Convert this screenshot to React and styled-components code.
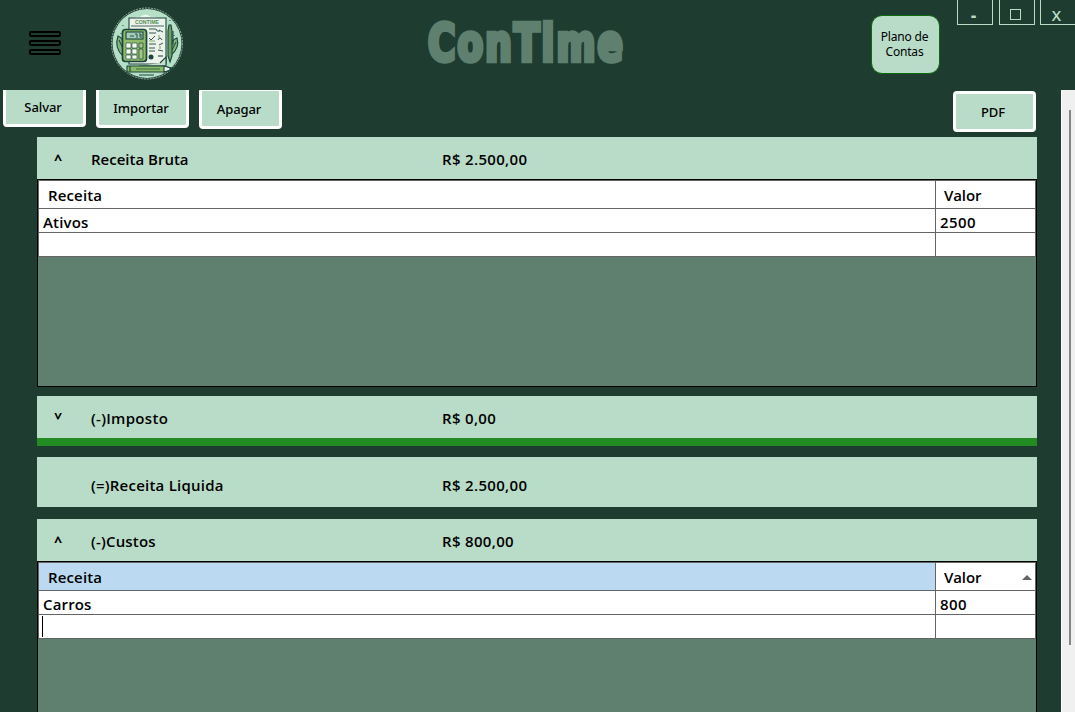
import React from "react";
import styled, { createGlobalStyle } from "styled-components";

const c = {
  dark: "#1e3c30",
  mint: "#b9dcc8",
  sage: "#5f806f",
  line: "#646464",
  green: "#228b22",
};

const GlobalStyle = createGlobalStyle`
  * { box-sizing: border-box; }
  body { margin: 0; background: ${c.dark}; overflow: hidden; }
  button { appearance: none; margin: 0; padding: 0; color: #000; }
`;

const Window = styled.div`
  display: flex;
  flex-direction: column;
  width: 1075px;
  height: 712px;
  overflow: hidden;
  background: ${c.dark};
  color: #000;
  font-family: "Open Sans", "Noto Sans", sans-serif;
`;

const TopBar = styled.header`
  display: flex;
  align-items: flex-start;
  flex: none;
  height: 90px;
  padding-left: 29px;
`;

const MenuButton = styled.button`
  display: flex;
  flex: none;
  flex-direction: column;
  gap: 3px;
  width: 32px;
  margin-top: 31px;
  border: 0;
  background: none;
`;

const MenuBar = styled.span`
  height: 6px;
  border: 2px solid #000;
  border-radius: 2px;
`;

const Logo = styled.svg`
  flex: none;
  width: 74px;
  height: 74px;
  margin: 6px 0 0 49px;
`;

const Title = styled.svg`
  flex: none;
  width: 204px;
  height: 60px;
  margin: 12px 0 0 240px;
  overflow: visible;
  text {
    font-family: "DejaVu Sans Condensed", "DejaVu Sans", sans-serif;
    font-stretch: condensed;
    font-weight: 700;
    font-size: 51px;
    letter-spacing: 2.6px;
    fill: ${c.sage};
    stroke: ${c.sage};
    stroke-width: 4.6px;
  }
`;

const PlanButton = styled.button`
  flex: none;
  width: 69px;
  height: 59px;
  margin: 15px 0 0 243px;
  border: 1px solid #0b6a0b;
  border-radius: 11px;
  background: ${c.mint};
  font: 400 12px/15px "Noto Sans", sans-serif;
  letter-spacing: -0.2px;
  padding: 0 2px 1px 0;
`;

const WindowButtons = styled.div`
  display: flex;
  flex: none;
  gap: 6px;
  margin-left: 17px;
`;

const WindowButton = styled.button`
  flex: none;
  width: 36px;
  height: 25px;
  border: 1px solid ${c.mint};
  border-top: 0;
  background: none;
  color: ${c.mint};
  font: 800 16px/18px "Open Sans", sans-serif;
  padding: 5px 3px 0 0;
  &:last-child { margin-left: -1px; font-weight: 600; font-size: 15px; }
`;

const MaximizeGlyph = styled.span`
  display: block;
  width: 11px;
  height: 11px;
  margin: 0 auto;
  border: 1px solid ${c.mint};
`;

const Viewport = styled.div`
  display: flex;
  flex: 1;
  min-height: 0;
  overflow: hidden;
`;

const Page = styled.main`
  flex: 1;
  min-width: 0;
`;

const Toolbar = styled.div`
  display: flex;
  gap: 10px;
  height: 47px;
  padding-left: 3px;
`;

const ToolButton = styled.button`
  width: ${(p) => p.$width || 83}px;
  height: 41px;
  margin-top: ${(p) => p.$top}px;
  margin-left: ${(p) => (p.$end ? "661px" : 0)};
  padding: 2px 3px 0 0;
  border: 3px solid #fff;
  border-radius: 4px;
  background: ${c.mint};
  font: 500 13px/17px "Noto Sans", sans-serif;
  letter-spacing: -0.1px;
`;

const Statement = styled.div`
  display: flex;
  flex-direction: column;
  width: 1000px;
  margin-left: 37px;
`;

const Section = styled.section`
  margin-bottom: ${(p) => p.$gap}px;
`;

const SectionHeader = styled.div`
  display: grid;
  grid-template-columns: 54px 351px 1fr;
  align-items: center;
  height: ${(p) => p.$height || 42}px;
  padding-top: ${(p) => p.$drop || 1}px;
  background: ${c.mint};
  font-size: 15px;
  font-weight: 600;
  line-height: 20px;
`;

const Label = styled.span`
  letter-spacing: ${(p) => p.$spacing || 0}px;
`;

const Amount = styled.span`
  letter-spacing: 0.33px;
`;

const Toggle = styled.span`
  width: 42px;
  text-align: center;
  font-family: "Noto Sans", sans-serif;
  font-weight: 800;
  font-size: 14px;
  transform: ${(p) => (p.$closed ? "translateY(-4px) scaleY(-1)" : "translateY(1px)")};
`;

const Accent = styled.div`
  height: 8px;
  background: ${c.green};
`;

const Grid = styled.div`
  height: 208px;
  border: 1px solid #000;
  background: ${c.sage};
`;

const Table = styled.div`
  border: 1px solid ${c.line};
  border-bottom: 0;
  font-size: 15px;
  font-weight: 600;
`;

const Row = styled.div`
  display: grid;
  grid-template-columns: 897px 1fr;
  height: ${(p) => (p.$head ? 28 : 24)}px;
`;

const Cell = styled.div`
  display: flex;
  align-items: center;
  padding: ${(p) => (p.$head ? "1px 3px 0 9px" : "3px 4px 0 4px")};
  border-bottom: 1px solid ${c.line};
  background: ${(p) => (p.$active ? "#bbdaf2" : "#fff")};
  line-height: 20px;
  letter-spacing: ${(p) => (p.$head ? 0.15 : 0.15)}px;
  &:first-child { border-right: 1px solid ${c.line}; }
  &:last-child {
    padding-left: ${(p) => (p.$head ? 8 : 4)}px;
    letter-spacing: ${(p) => (p.$head ? -0.1 : 0.4)}px;
  }
`;

const SortArrow = styled.svg`
  width: 10px;
  height: 5px;
  margin: 1px 0 0 auto;
`;

const Caret = styled.span`
  width: 1px;
  height: 21px;
  margin: -3px 0 0 -1px;
  background: #000;
`;

const Scrollbar = styled.div`
  flex: none;
  width: 14px;
  padding: 20px 0 0 8px;
  border-left: 1px solid #fff;
  background: #f0f0f0;
`;

const Thumb = styled.div`
  width: 2px;
  height: 535px;
  margin-left: -1px;
  background: #858585;
`;

function ContimeLogo() {
  return (
    <Logo viewBox="0 0 74 74" stroke="#1b453c" strokeWidth="1.1">
      <circle cx="37" cy="37.5" r="34.5" fill="#b6dfc8" stroke="none" />
      <circle cx="37" cy="37.5" r="35.5" fill="none" stroke="#b8c9bf" strokeWidth=".8" strokeDasharray="2 1" />
      <path d="M22 14q3-4 8-3q5-5 11 0q5-1 8 3z" fill="#edf7ee" stroke="none" />
      <path d="M13 50Q4 42 8 30q6 3 7 9zM61 49q9-7 6-17q-6 2-7 9z" fill="#82b47a" />
      <path d="M9 34l5 11M66 36l-5 10" fill="none" strokeWidth="1" />
      <path d="M19 12h37v46H19z" fill="#edf3eb" />
      <path d="M50 57l6-6v9H29" fill="#c9dfcc" />
      <path d="M21 20h33" strokeWidth=".8" />
      <text x="25" y="18" textLength="24" lengthAdjust="spacingAndGlyphs" fill="#518b56" stroke="none" fontFamily="Liberation Sans, sans-serif" fontWeight="700" fontSize="5.2">CONTIME</text>
      <path d="M39 23h6q2 0 2 2h3M39 27h7M39 32l2 2 4-4M48 34q2-4 4 0M39 38h7M39 42h6M39 45h6M49 24l4 2M49 39l4-2M48 44l5 1" fill="none" strokeWidth=".9" />
      <path d="M39 35h6M49 29v3M50 40v3" stroke="#78ae64" />
      <circle cx="41" cy="51" r="2.5" fill="#1b453c" stroke="none" />
      <path d="M48 50h5" />
      <rect x="12.5" y="23.5" width="24" height="32" rx="3" fill="#8fbb6a" strokeWidth="1.7" />
      <rect x="16" y="26" width="17" height="7" fill="#a5ccb7" />
      <path d="M20 30h4M25 28h2v4M29 28h2v4M29 30h2" fill="none" strokeWidth=".9" />
      <g fill="#f4f8f1" strokeWidth=".6">
        <path d="M16 37h5v5h-5zM22 37h5v5h-5zM16 43h5v5h-5zM22 43h5v5h-5zM16 49h5v4h-5zM22 49h5v4h-5z" />
      </g>
      <path d="M29 37h4v5h-4zM29 43h4v10h-4z" fill="#a5c685" strokeWidth=".7" />
      <path d="M58 25l1-6h2l1 6v25l-2 6-2-6z" fill="#739f69" />
      <path d="M63 25v14" />
      <path d="M17 60h37l10 3-10 3H17z" fill="#8aba68" />
      <path d="M54 60l10 3-10 3zM20 60v6" fill="#edf2e9" />
      <path d="M26 63h24" strokeWidth=".7" />
      <path d="M60 62l4 1-4 1z" fill="#1b453c" />
      <path d="M29 69h15M13 19v1M60 14v1M64 29v1M11 27v1" strokeWidth="1" />
    </Logo>
  );
}

function DataGrid({ name, value, active }) {
  return (
    <Grid>
      <Table>
        <Row $head>
          <Cell $head $active={active}>Receita</Cell>
          <Cell $head>
            Valor
            {active && (
              <SortArrow viewBox="0 0 10 5"><path d="M0 5L5 0L10 5z" fill="#646464" /></SortArrow>
            )}
          </Cell>
        </Row>
        <Row><Cell>{name}</Cell><Cell>{value}</Cell></Row>
        <Row><Cell>{active && <Caret />}</Cell><Cell /></Row>
      </Table>
    </Grid>
  );
}

export default function App() {
  return (
    <>
      <GlobalStyle />
      <Window>
        <TopBar>
          <MenuButton aria-label="Menu"><MenuBar /><MenuBar /><MenuBar /></MenuButton>
          <ContimeLogo />
          <Title viewBox="0 0 204 60">
            <text x="4" y="49" textLength="197" lengthAdjust="spacingAndGlyphs">ConTime</text>
          </Title>
          <PlanButton>Plano de<br />Contas</PlanButton>
          <WindowButtons>
            <WindowButton>-</WindowButton>
            <WindowButton aria-label="Maximizar"><MaximizeGlyph /></WindowButton>
            <WindowButton>X</WindowButton>
          </WindowButtons>
        </TopBar>
        <Viewport>
          <Page>
            <Toolbar>
              <ToolButton $top={-4}>Salvar</ToolButton>
              <ToolButton $top={-3} $width={93}>Importar</ToolButton>
              <ToolButton $top={-2}>Apagar</ToolButton>
              <ToolButton $top={1} $end>PDF</ToolButton>
            </Toolbar>
            <Statement>
              <Section $gap={9}>
                <SectionHeader><Toggle>^</Toggle><Label>Receita Bruta</Label><Amount>R$ 2.500,00</Amount></SectionHeader>
                <DataGrid name="Ativos" value="2500" />
              </Section>
              <Section $gap={11}>
                <SectionHeader><Toggle $closed>^</Toggle><Label $spacing={0.3}>(-)Imposto</Label><Amount>R$ 0,00</Amount></SectionHeader>
                <Accent />
              </Section>
              <Section $gap={12}>
                <SectionHeader $height={50} $drop={6}><span /><Label $spacing={0.23}>(=)Receita Liquida</Label><Amount>R$ 2.500,00</Amount></SectionHeader>
              </Section>
              <Section $gap={0}>
                <SectionHeader><Toggle>^</Toggle><Label $spacing={0.2}>(-)Custos</Label><Amount>R$ 800,00</Amount></SectionHeader>
                <DataGrid name="Carros" value="800" active />
              </Section>
            </Statement>
          </Page>
          <Scrollbar><Thumb /></Scrollbar>
        </Viewport>
      </Window>
    </>
  );
}
